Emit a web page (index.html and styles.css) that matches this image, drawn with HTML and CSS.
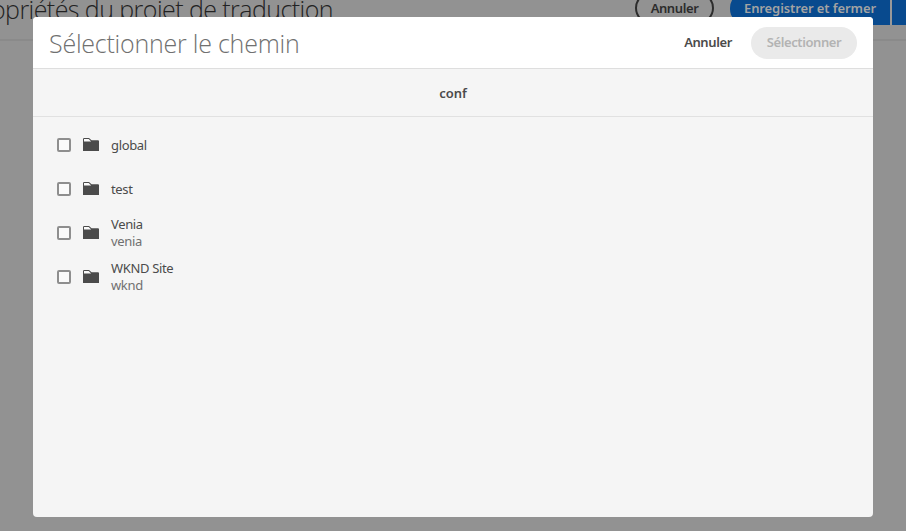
FILE: index.html
```html
<!DOCTYPE html>
<html lang="fr">
<head>
<meta charset="utf-8">
<title>Sélectionner le chemin</title>
<link rel="stylesheet" href="styles.css">
</head>
<body>
<header class="page-bar">
  <h1 class="page-title">opriétés du projet de traduction</h1>
  <div class="page-actions">
    <button class="pill outline">Annuler</button>
    <button class="save">Enregistrer et fermer</button>
    <button class="save-more" aria-label="Plus"></button>
  </div>
</header>
<div class="overlay">
  <section class="dialog">
    <header class="dialog-header">
      <h2 class="dialog-title">Sélectionner le chemin</h2>
      <button class="quiet">Annuler</button>
      <button class="pill disabled">Sélectionner</button>
    </header>
    <div class="column-title">conf</div>
    <ul class="items">
      <li class="item"><span class="check"></span><svg class="folder" viewBox="0 0 16 14"><path d="M0 4V1.2Q0 0 1.2 0H6L8.6 2.2H15Q16 2.2 16 3.2V13H0Z"/><path class="tab" d="M1 3.6V1H5.7L8.2 3.6Z"/></svg><div class="label"><span>global</span></div></li>
      <li class="item"><span class="check"></span><svg class="folder" viewBox="0 0 16 14"><path d="M0 4V1.2Q0 0 1.2 0H6L8.6 2.2H15Q16 2.2 16 3.2V13H0Z"/><path class="tab" d="M1 3.6V1H5.7L8.2 3.6Z"/></svg><div class="label"><span>test</span></div></li>
      <li class="item"><span class="check"></span><svg class="folder" viewBox="0 0 16 14"><path d="M0 4V1.2Q0 0 1.2 0H6L8.6 2.2H15Q16 2.2 16 3.2V13H0Z"/><path class="tab" d="M1 3.6V1H5.7L8.2 3.6Z"/></svg><div class="label"><span>Venia</span><span class="name">venia</span></div></li>
      <li class="item"><span class="check"></span><svg class="folder" viewBox="0 0 16 14"><path d="M0 4V1.2Q0 0 1.2 0H6L8.6 2.2H15Q16 2.2 16 3.2V13H0Z"/><path class="tab" d="M1 3.6V1H5.7L8.2 3.6Z"/></svg><div class="label"><span>WKND Site</span><span class="name">wknd</span></div></li>
    </ul>
  </section>
</div>
</body>
</html>
```
FILE: styles.css
```css
* { box-sizing: border-box; }
body {
  margin: 0;
  height: 531px;
  overflow: hidden;
  background: #929292;
  color: #4b4b4b;
  font-family: "Noto Sans", "Open Sans", sans-serif;
  font-size: 13px;
}
h1, h2, ul { margin: 0; padding: 0; }
button {
  border: 0;
  padding: 0 0 1px;
  background: none;
  font: inherit;
  font-weight: 600;
  letter-spacing: -0.4px;
  color: #4b4b4b;
  white-space: nowrap;
}
.page-bar {
  display: flex;
  justify-content: space-between;
  height: 41px;
  border-bottom: 2px solid #8a8a8a;
}
.page-title, .dialog-title {
  font-family: "Open Sans", "Noto Sans", sans-serif;
  font-weight: 300;
  font-size: 25px;
  line-height: 34px;
  white-space: nowrap;
}
.page-title {
  margin: -8px 0 0 -9px;
  color: #222;
  letter-spacing: -0.56px;
}
.page-actions { display: flex; margin-top: -8px; }
.pill { height: 32px; border-radius: 16px; }
.outline {
  width: 79px;
  padding: 0;
  border: 2px solid #2c2c2c;
  color: #2c2c2c;
  margin-right: 16px;
}
.save {
  width: 160px;
  height: 33px;
  border-radius: 16px 0 0 16px;
  background: #084a8e;
  color: #a3a3a3;
  padding-bottom: 2px;
  letter-spacing: -0.1px;
}
.save-more {
  width: 14px;
  height: 33px;
  margin-left: 2px;
  background: #084a8e;
  box-shadow: -2px 0 #999;
}
.overlay {
  position: absolute;
  inset: 0;
  padding: 17px 33px 14px;
}
.dialog {
  height: 500px;
  overflow: hidden;
  border-radius: 4px;
  background: #f5f5f5;
}
.dialog-header {
  display: flex;
  align-items: center;
  height: 52px;
  padding: 0 16px;
  background: #fff;
  border-bottom: 1px solid #dedede;
}
.dialog-title { flex: 1; color: #707070; letter-spacing: -0.23px; }
.quiet { width: 48px; margin-right: 19px; padding-bottom: 2px; }
.disabled { width: 106px; padding-bottom: 2px; background: #eaeaea; color: #b3b3b3; }
.column-title {
  height: 48px;
  line-height: 48px;
  border-bottom: 1px solid #e1e1e1;
  text-align: center;
  font-weight: 600;
}
.items { padding-top: 6px; list-style: none; }
.item { display: flex; align-items: center; height: 44px; padding-left: 24px; }
.check {
  width: 14px;
  height: 14px;
  border: 2px solid #8e8e8e;
  border-radius: 2px;
  background: #fafafa;
}
.folder { width: 16px; height: 14px; margin: 0 12px; fill: #4b4b4b; }
.tab { fill: #fafafa; }
.label { line-height: 17px; letter-spacing: -0.35px; }
.label span { display: block; }
.label .name { color: #707070; }
```
